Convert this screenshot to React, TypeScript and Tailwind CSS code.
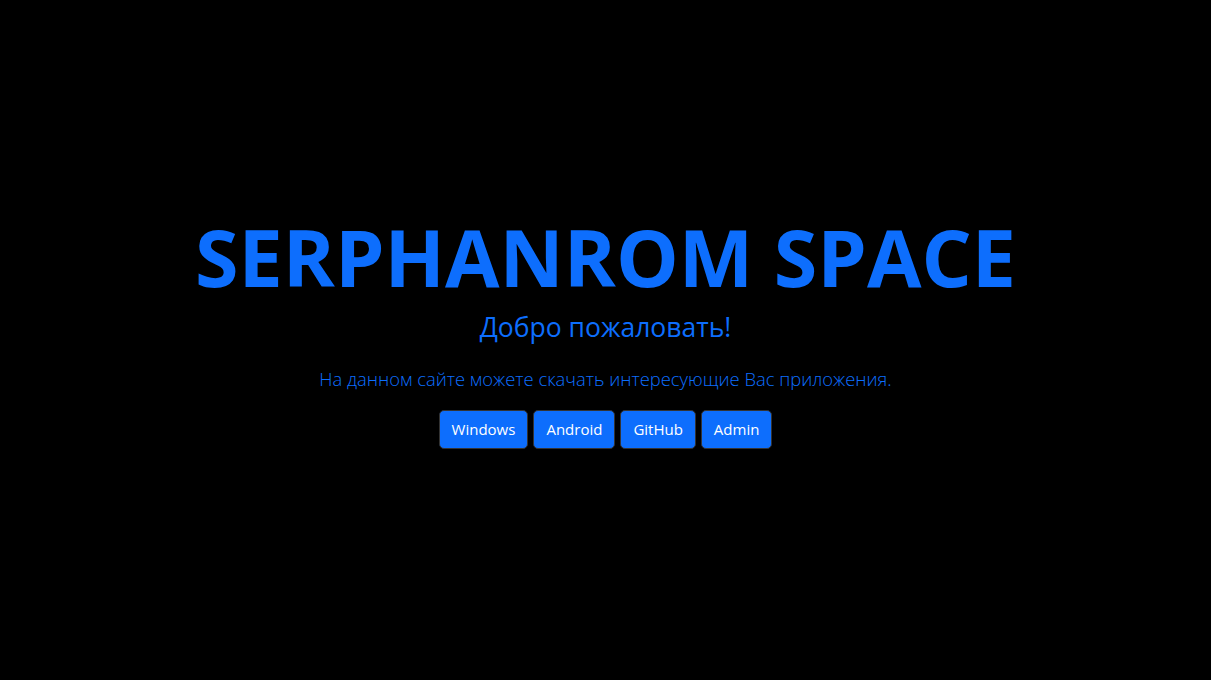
export default function App() {
  const links = ['Windows', 'Android', 'GitHub', 'Admin'];

  return (
    <div className="min-h-screen bg-black flex flex-col items-center justify-center pb-[14px] text-center font-['Open_Sans',sans-serif]">
      <h1 className="text-[79px] font-bold leading-none text-[#0d6efd]">SERPHANROM SPACE</h1>
      <h2 className="mt-[15px] text-[26.5px] leading-tight text-[#0d6efd]">Добро пожаловать!</h2>
      <p className="mt-[20px] text-[18.4px] font-light text-[#0d6efd]">
        На данном сайте можете скачать интересующие Вас приложения.
      </p>
      <div className="mt-[18px] flex gap-[5px]">
        {links.map((name) => (
          <a
            key={name}
            href="#"
            className="rounded-[5px] border border-[#333] bg-[#0d6efd] px-[12px] py-[7px] text-[15px] text-white"
          >
            {name}
          </a>
        ))}
      </div>
    </div>
  );
}
